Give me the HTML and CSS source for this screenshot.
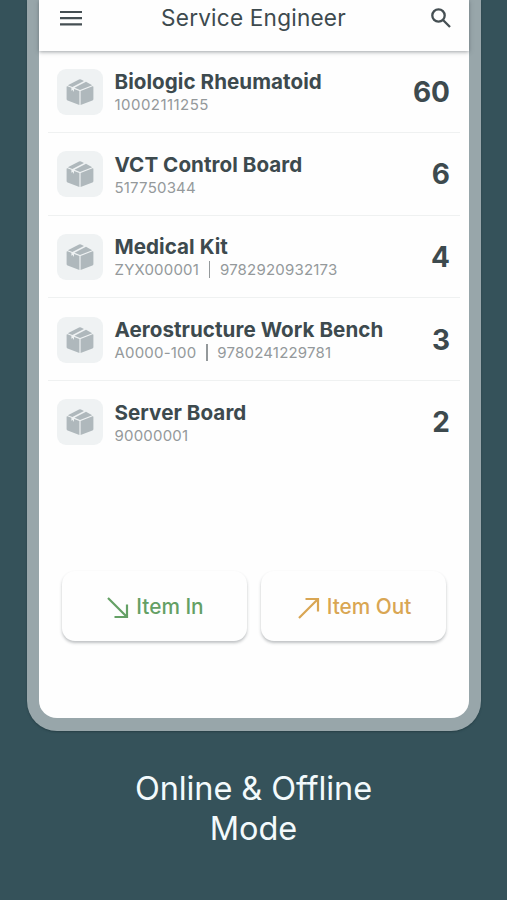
FILE: index.html
```html
<!DOCTYPE html>
<html lang="en">
<head>
<meta charset="utf-8">
<title>Service Engineer</title>
<link rel="stylesheet" href="styles.css">
</head>
<body>
<svg class="defs" width="0" height="0" aria-hidden="true">
  <symbol id="box" viewBox="0 0 28 28">
    <path d="M.6 8.9Q.6 8 1.4 8.3L5.4 9.8V12.8L6.7 11.9 8 14V10.9L13.4 13V27L1.6 22.6Q.6 22.1.6 21ZM14.6 13 26.6 8.3Q27.4 8 27.4 8.9V21Q27.4 22.1 26.4 22.6L14.6 27Z"/>
    <path d="M1.8 7.2 13 1.5Q14 1 15 1.5L18 2.9 6.4 8.9ZM8.5 9.8 20 3.8 26.2 7.2 14 11.9Z"/>
  </symbol>
</svg>
<main class="phone">
  <header class="bar">
    <svg class="menu" viewBox="0 0 22 16"><path d="M0 2H22M0 8.2H22M0 14.4H22"/></svg>
    <h1>Service Engineer</h1>
    <svg class="search" viewBox="0 0 20 20"><circle cx="7.5" cy="7.5" r="6.2"/><path d="M12 12 19 19"/></svg>
  </header>
  <ul class="items">
    <li><span class="thumb"><svg><use href="#box"/></svg></span><div class="info"><h2>Biologic Rheumatoid</h2><p class="wide">10002111255</p></div><b>60</b></li>
    <li><span class="thumb"><svg><use href="#box"/></svg></span><div class="info"><h2>VCT Control Board</h2><p>517750344</p></div><b>6</b></li>
    <li><span class="thumb"><svg><use href="#box"/></svg></span><div class="info"><h2>Medical Kit</h2><p>ZYX000001<i></i>9782920932173</p></div><b>4</b></li>
    <li><span class="thumb"><svg><use href="#box"/></svg></span><div class="info"><h2>Aerostructure Work Bench</h2><p>A0000-100<i></i>9780241229781</p></div><b>3</b></li>
    <li><span class="thumb"><svg><use href="#box"/></svg></span><div class="info"><h2>Server Board</h2><p>90000001</p></div><b>2</b></li>
  </ul>
  <div class="actions">
    <button class="in"><svg viewBox="0 0 22 22"><path d="M1 1 20 20M7.5 20H20V7.5"/></svg><span>Item In</span></button>
    <button class="out"><svg viewBox="0 0 22 22"><path d="M1 21 20 2M7.5 2H20V14.5"/></svg><span>Item Out</span></button>
  </div>
</main>
<p class="caption">Online &amp; Offline<br>Mode</p>
</body>
</html>
```

FILE: styles.css
```css
* { box-sizing: border-box; margin: 0; padding: 0; }
body {
  height: 900px;
  overflow: hidden;
  background: #35525a;
  font-family: Inter, "Liberation Sans", sans-serif;
  color: #3d4a4e;
}
.defs { display: block; height: 0; }
.phone {
  width: 454px;
  height: 731px;
  margin-left: 27px;
  border: 12px solid #98a6aa;
  border-bottom-width: 13px;
  border-top: 0;
  border-radius: 0 0 30px 30px;
  background: #fefefe;
  box-shadow: 0 1px 2px #263f46;
}
.bar {
  display: flex;
  align-items: center;
  justify-content: space-between;
  height: 50.5px;
  padding: 0 18px 15px 21px;
  background: #fefefe;
  box-shadow: 0 1px 4px rgba(60, 70, 75, .5);
}
.bar h1 { margin-right: 6px; font-size: 22.6px; font-weight: 400; letter-spacing: .2px; }
svg { fill: none; }
.menu { width: 22px; height: 16px; margin-top: 1px; stroke: #454f53; stroke-width: 2.2; }
.search { width: 20px; height: 20px; margin-top: 1px; stroke: #454f53; stroke-width: 2.3; }
.items { list-style: none; padding: 0 9px; }
.items li {
  display: flex;
  align-items: center;
  height: 82.6px;
  padding: 1px 10px 0 9px;
  border-bottom: 1px solid #eff1f1;
}
.items li:last-child { border-bottom: 0; padding-top: 0; }
.thumb {
  display: grid;
  place-items: center;
  width: 46px;
  height: 46px;
  border-radius: 9px;
  background: #eff2f3;
}
.thumb svg { width: 28px; height: 28px; fill: #afb8bc; }
.info { flex: 1; padding: 2px 0 0 11.5px; }
.info h2 { font-size: 20.6px; line-height: 24px; font-weight: 700; letter-spacing: .05px; }
.info p { display: flex; align-items: center; font-size: 15px; line-height: 21px; letter-spacing: .2px; color: #94999b; }
.info .wide { letter-spacing: .45px; }
.info i { width: 1.5px; height: 17px; margin: 0 9.7px; background: #94999b; }
.items b { font-size: 28px; font-weight: 700; }
.actions { display: flex; gap: 14px; padding: 108px 23px 0; }
.actions button {
  display: flex;
  align-items: center;
  justify-content: center;
  flex: 1;
  height: 70px;
  padding: 2px 0 0 2px;
  gap: 7px;
  border: 0;
  border-radius: 13px;
  background: #fefefe;
  box-shadow: 0 2px 3px rgba(60, 70, 75, .33);
  font: 500 20.8px/26px Inter, sans-serif;
}
.actions svg { width: 22px; height: 22px; margin-top: 1px; stroke: currentColor; stroke-width: 2.2; }
.actions .in { color: #64a065; }
.actions .out { color: #d9a653; }
.caption {
  margin-top: 38px;
  text-align: center;
  color: #f3fafc;
  font-size: 32.5px;
  line-height: 39.5px;
  font-weight: 400;
  letter-spacing: -.1px;
}
```
